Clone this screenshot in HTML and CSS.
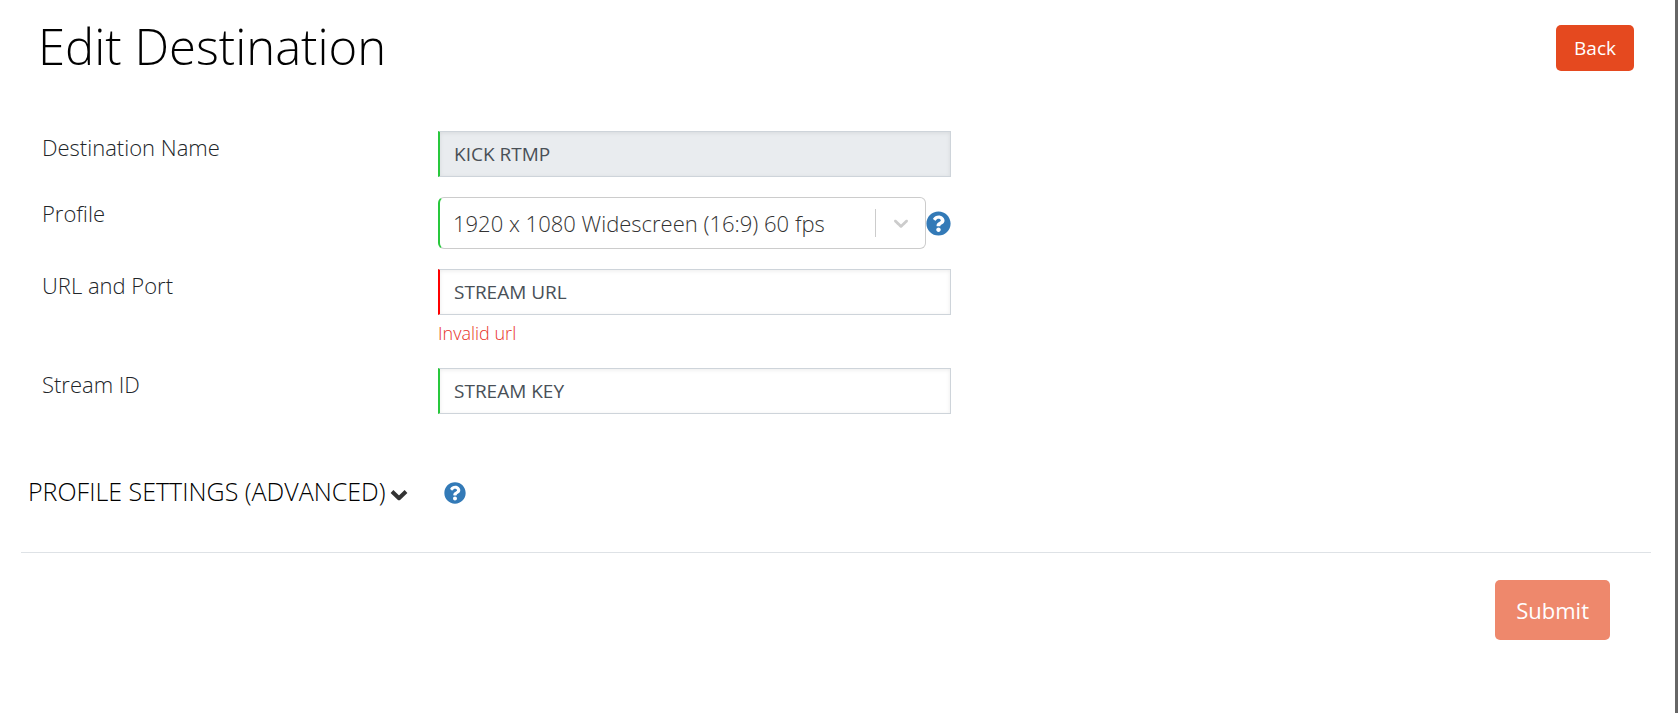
FILE: index.html
```html
<!DOCTYPE html>
<html lang="en">
<head>
  <meta charset="utf-8">
  <title>Edit Destination</title>
  <link rel="stylesheet" href="styles.css">
</head>
<body>
  <svg class="sprite" aria-hidden="true">
    <symbol id="help" viewBox="0 0 512 512">
      <path fill="currentColor" d="M504 256c0 137-111 248-248 248S8 393 8 256C8 119.100 119 8 256 8s248 111.100 248 248zM262.700 90c-54.500 0-89.300 23-116.500 63.800-3.500 5.300-2.400 12.400 2.700 16.300l34.700 26.300c5.200 3.900 12.600 3 16.700-2.100 17.900-22.700 30.100-35.800 57.300-35.800 20.400 0 45.700 13.100 45.700 33 0 15-12.400 22.700-32.500 34C247.100 238.500 216 254.900 216 296v4c0 6.600 5.400 12 12 12h56c6.600 0 12-5.400 12-12v-1.300c0-28.500 83.200-29.600 83.200-106.700 0-58-60.200-102-116.500-102zM256 338c-25.400 0-46 20.600-46 46s20.600 46 46 46 46-20.600 46-46-20.600-46-46-46z"/>
    </symbol>
  </svg>
  <main class="page">
    <header class="header">
      <h1 class="title">Edit Destination</h1>
      <button class="btn btn-back" type="button">Back</button>
    </header>

    <form class="form">
      <div class="row">
        <label class="label" for="name">Destination Name</label>
        <div class="field">
          <input class="input valid" id="name" type="text" value="KICK RTMP" disabled>
        </div>
      </div>
      <div class="row">
        <label class="label" for="profile">Profile</label>
        <div class="field field-inline">
          <div class="select-box">
            <select class="select" id="profile">
              <option>1920 x 1080 Widescreen (16:9) 60 fps</option>
            </select>
            <span class="indicator">
              <svg class="caret" viewBox="0 0 20 20" aria-hidden="true"><path fill="currentColor" d="M4.516 7.548c0.436-0.446 1.043-0.481 1.576 0l3.908 3.747 3.908-3.747c0.533-0.481 1.141-0.446 1.574 0 0.436 0.445 0.408 1.197 0 1.615-0.406 0.418-4.695 4.502-4.695 4.502-0.217 0.223-0.502 0.335-0.787 0.335s-0.570-0.112-0.789-0.335c0 0-4.287-4.084-4.695-4.502s-0.436-1.170 0-1.615z"/></svg>
            </span>
          </div>
          <svg class="help" role="img" aria-label="Profile help"><use href="#help"/></svg>
        </div>
      </div>
      <div class="row">
        <label class="label" for="url">URL and Port</label>
        <div class="field">
          <input class="input invalid" id="url" type="text" value="STREAM URL" aria-describedby="url-error">
          <p class="error" id="url-error">Invalid url</p>
        </div>
      </div>
      <div class="row">
        <label class="label" for="stream">Stream ID</label>
        <div class="field">
          <input class="input valid" id="stream" type="text" value="STREAM KEY">
        </div>
      </div>

      <div class="advanced">
        <button class="toggle" type="button" aria-expanded="false">
          PROFILE SETTINGS (ADVANCED)
          <svg class="chevron" viewBox="0 0 18 12" aria-hidden="true"><path fill="none" stroke="currentColor" stroke-width="4" stroke-linejoin="round" d="M2 2.500L9 9.200L16 2.500"/></svg>
        </button>
        <svg class="help help-small" role="img" aria-label="Profile settings help"><use href="#help"/></svg>
      </div>

      <footer class="footer">
        <button class="btn btn-submit" type="submit" disabled>Submit</button>
      </footer>
    </form>
  </main>
</body>
</html>
```
FILE: styles.css
```css
* {
  box-sizing: border-box;
}

body {
  margin: 0;
  background: #fff;
  color: #212529;
  font-family: "Open Sans", "Noto Sans", sans-serif;
  font-size: 22px;
  font-weight: 300;
  line-height: 33px;
}

.sprite {
  display: none;
}

.page {
  min-height: 100vh;
  border-right: 3px solid #666;
}

.header {
  display: flex;
  justify-content: space-between;
  align-items: center;
  padding: 16px 41px 0 38px;
}

.title {
  margin: 0 0 4px;
  color: #000;
  font-size: 49px;
  font-weight: 300;
  line-height: 60px;
}

.btn {
  border: 0;
  border-radius: 5px;
  background: #e5491f;
  color: #fff;
  font-family: inherit;
  font-weight: 400;
}

.btn-back {
  height: 46px;
  padding: 0 18px;
  font-size: 19px;
}

.form {
  padding-top: 51px;
}

.row {
  display: grid;
  grid-template-columns: 3fr 4fr 5fr;
  margin: 0 64px 20px 27px;
}

.label {
  padding: 0 15px;
}

.field {
  padding-left: 15px;
}

.field-inline {
  display: flex;
  align-items: center;
}

.input {
  display: block;
  width: 100%;
  height: 46px;
  padding: 0 14px;
  border: 1px solid #ced4da;
  border-left-width: 2px;
  border-radius: 0;
  background: #fff;
  box-shadow: inset 0 1px 4px rgba(0, 0, 0, 0.08);
  color: #495057;
  font-family: inherit;
  font-size: 19px;
  font-weight: 400;
}

.input:disabled {
  background: #e9ecef;
}

.valid {
  border-left-color: #28c83c;
}

.invalid {
  border-left-color: #f00;
}

.error {
  margin: 4px 0 0;
  color: #e8322a;
  font-size: 18px;
  line-height: 29px;
}

.select-box {
  display: grid;
  flex: 1;
}

.select {
  grid-area: 1 / 1;
  min-width: 0;
  height: 52px;
  padding: 0 60px 0 13px;
  border: 1px solid #ccc;
  border-left: 2px solid #28c83c;
  border-radius: 6px;
  appearance: none;
  background: #fff;
  color: #333;
  font: inherit;
}

.indicator {
  grid-area: 1 / 1;
  justify-self: end;
  align-self: center;
  display: flex;
  align-items: center;
  height: 28px;
  padding: 0 13px;
  border-left: 1px solid #ccc;
  color: #ccc;
  pointer-events: none;
}

.caret {
  width: 24px;
  height: 24px;
}

.help {
  flex: none;
  width: 25px;
  height: 25px;
  color: #337ab7;
}

.help-small {
  width: 22px;
  height: 22px;
}

.advanced {
  display: flex;
  align-items: center;
  gap: 36px;
  padding: 41px 28px 41px;
}

.toggle {
  display: flex;
  align-items: center;
  gap: 5px;
  padding: 0 0 4px;
  border: 0;
  background: none;
  color: #000;
  font: inherit;
  font-size: 25px;
  line-height: 32px;
}

.chevron {
  width: 18px;
  height: 12px;
  margin-top: 8px;
  color: #333;
}

.footer {
  display: flex;
  justify-content: flex-end;
  margin: 0 24px 0 21px;
  padding: 27px 41px;
  border-top: 1px solid #dee2e6;
}

.btn-submit {
  height: 60px;
  padding: 0 21px;
  font-size: 22px;
  opacity: 0.65;
}
```
